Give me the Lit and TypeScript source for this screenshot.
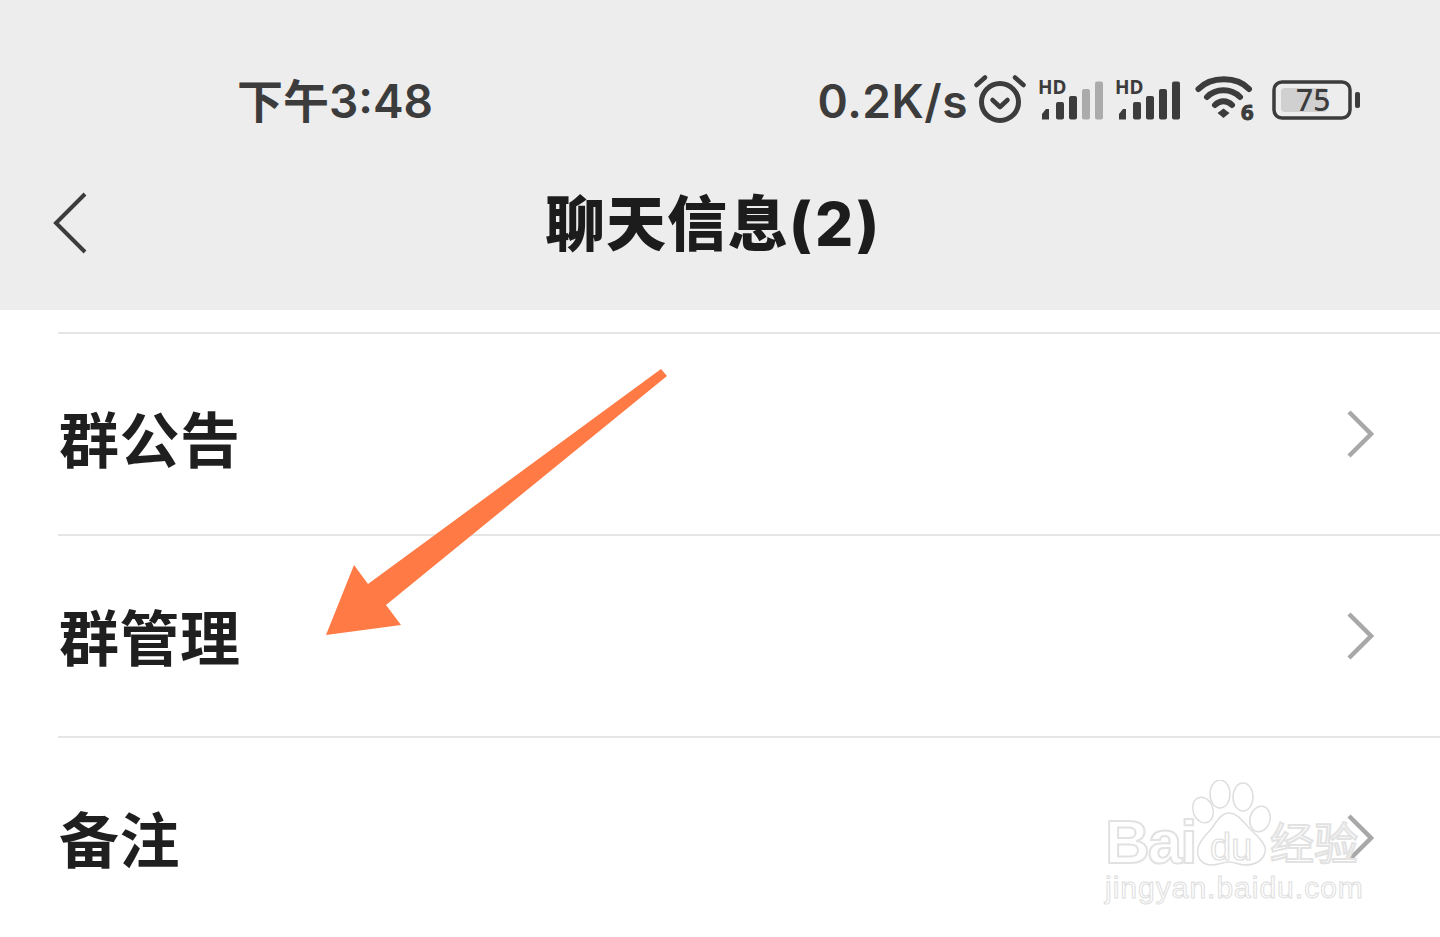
import { LitElement, html, css, svg } from 'lit';
import { customElement } from 'lit/decorators.js';

const rows = ['群公告', '群管理', '备注'];

const signal = (dim: boolean) => html`
  <svg class="signal" width="66" height="56" viewBox="0 -8 66 56">
    <text x="0" y="14" class="hd">HD</text>
    <path d="M4 39.500V34l4-5h3v10.500z" fill="#3c3c3c" />
    <rect x="18" y="22" width="8" height="17.500" rx="2" fill="#3c3c3c" />
    <rect x="31" y="16" width="8" height="23.500" rx="2" fill="#3c3c3c" />
    <rect x="44" y="9" width="8" height="30.500" rx="2" fill=${dim ? '#ababab' : '#3c3c3c'} />
    <rect x="57" y="1.500" width="8" height="38" rx="2" fill=${dim ? '#ababab' : '#3c3c3c'} />
  </svg>
`;

@customElement('app-root')
export class AppRoot extends LitElement {
  static styles = css`
    :host {
      display: block;
      position: relative;
      width: 1440px;
      height: 937px;
      overflow: hidden;
      background: #fff;
      font-family: 'Inter', 'Noto Sans CJK SC', sans-serif;
    }

    .header {
      height: 310px;
      background: #ededed;
      display: flex;
      flex-direction: column;
    }

    .status {
      display: flex;
      align-items: center;
      height: 76px;
      margin-top: 62px;
      padding: 0 78px 0 237px;
      color: #3c3c3c;
    }

    .time {
      font-size: 46px;
      font-weight: 600;
      line-height: 76px;
      flex: 1;
      padding-top: 2px;
    }

    .speed {
      font-size: 46px;
      font-weight: 600;
      line-height: 76px;
      margin-right: 6px;
      letter-spacing: 0.5px;
      padding-top: 2px;
    }

    .alarm {
      margin-right: 12px;
    }

    .signal {
      margin-right: 11px;
    }

    .signal + .signal {
      margin-right: 14px;
    }

    .hd {
      font-family: 'Noto Sans', sans-serif;
      font-size: 19px;
      font-weight: 700;
      fill: #3c3c3c;
    }

    .wifi {
      margin-right: 17px;
    }

    .wifi text {
      font-family: 'Noto Sans', sans-serif;
      font-size: 22px;
      font-weight: 700;
      fill: #3c3c3c;
    }

    .battery text {
      font-family: 'Noto Sans', sans-serif;
      font-size: 30px;
      font-weight: 500;
      fill: #3c3c3c;
    }

    .nav {
      display: flex;
      align-items: center;
      height: 106px;
      margin-top: 32px;
      padding-left: 52px;
    }

    .back {
      display: block;
    }

    .title {
      margin: 2px 0 0 457px;
      font-size: 60px;
      font-weight: 800;
      line-height: 106px;
      letter-spacing: 1px;
      color: #1c1c1c;
      white-space: nowrap;
    }

    .count {
      letter-spacing: 3px;
    }

    .list {
      padding: 22px 0 0 58px;
    }

    .row {
      display: flex;
      align-items: center;
      justify-content: space-between;
      height: 200px;
      border-top: 2px solid #e5e5e5;
      padding-right: 66px;
    }

    .label {
      font-size: 60px;
      font-weight: 700;
      color: #1f1f1f;
      margin: -4px 0 0 1px;
      letter-spacing: 0.5px;
    }

    .row:first-child .label {
      margin-top: 4px;
    }

    .arrow {
      position: absolute;
      left: 0;
      top: 0;
      pointer-events: none;
    }

    .mark {
      position: absolute;
      left: 1100px;
      top: 778px;
      width: 270px;
      height: 132px;
      pointer-events: none;
    }

    .mark-text {
      position: absolute;
      color: #fff;
      -webkit-text-stroke: 2px #e2e2e2;
      white-space: nowrap;
    }

    .bai {
      left: 5px;
      top: 29px;
      font-family: 'Liberation Sans', sans-serif;
      font-size: 62px;
      line-height: 70px;
      font-weight: 700;
      letter-spacing: -2px;
    }

    .jy {
      left: 170px;
      top: 36px;
      font-size: 44px;
      line-height: 60px;
    }

    .url {
      left: 5px;
      top: 92px;
      font-family: 'Liberation Sans', sans-serif;
      font-size: 30px;
      line-height: 36px;
      -webkit-text-stroke: 1px #dedede;
      letter-spacing: 1px;
    }

    .paw {
      position: absolute;
      left: 82px;
      top: 2px;
    }

    .du {
      font-family: 'Liberation Sans', sans-serif;
      font-size: 38px;
      fill: #fff;
      stroke: #dedede;
      stroke-width: 1.2;
    }
  `;

  render() {
    return html`
      <div class="header">
        <div class="status">
          <span class="time">下午3:48</span>
          <span class="speed">0.2K/s</span>
          <svg class="alarm" width="52" height="50" viewBox="0 0 52 50" fill="none" stroke="#3c3c3c">
            <circle cx="26" cy="27" r="18.500" stroke-width="5" />
            <path d="M18.5 25l7.500 7 7.500-7" stroke-width="4.500" stroke-linecap="round" stroke-linejoin="round" />
            <path d="M11 2.500L2.500 10M41 2.500L49.500 10" stroke-width="4.500" stroke-linecap="round" />
          </svg>
          ${signal(true)} ${signal(false)}
          <svg class="wifi" width="60" height="50" viewBox="0 0 60 50" fill="none" stroke="#3c3c3c" stroke-linecap="round">
            <path d="M3.500 14C16 1 42 1 54 14" stroke-width="6" />
            <path d="M12 22C21 13 36 13 45 22" stroke-width="6" />
            <path d="M20 30C25 25 32 25 37 30" stroke-width="6" />
            <path d="M28.500 43l-6-5 6-4.500 6 4.500z" fill="#3c3c3c" stroke="none" />
            <text x="46" y="45">6</text>
          </svg>
          <svg class="battery" width="90" height="40" viewBox="0 0 90 40">
            <rect x="2" y="2" width="76" height="36" rx="8" fill="none" stroke="#3c3c3c" stroke-width="3.500" />
            <rect x="9" y="8" width="46" height="24" rx="4" fill="#d0d0d0" />
            <text x="24" y="31">75</text>
            <rect x="83" y="12" width="5" height="16" rx="2" fill="#3c3c3c" />
          </svg>
        </div>
        <div class="nav">
          <svg class="back" width="36" height="62" viewBox="0 0 36 62" fill="none" stroke="#3c3c3c" stroke-width="4">
            <path d="M33 2L4 31l29 29" />
          </svg>
          <span class="title">聊天信息<span class="count">(2)</span></span>
        </div>
      </div>
      <div class="list">
        ${rows.map(
          label => html`
            <div class="row">
              <span class="label">${label}</span>
              <svg width="28" height="48" viewBox="0 0 28 48" fill="none" stroke="#a8a8a8" stroke-width="4.500">
                <path d="M3 2l22 22L3 46" />
              </svg>
            </div>
          `
        )}
      </div>
      <svg class="arrow" width="1440" height="937" viewBox="0 0 1440 937">
        <path d="M661 369L667 376 386 605 401 625 326 635 354 565 368 584z" fill="#ff7a45" />
      </svg>
      <div class="mark">
        <span class="mark-text bai">Bai</span>
        <svg class="paw" width="90" height="92" viewBox="0 0 90 92">
          ${svg`
            <g fill="#fff" stroke="#dedede" stroke-width="1.500">
              <ellipse cx="21" cy="30" rx="10" ry="13" transform="rotate(-20 21 30)" />
              <ellipse cx="38" cy="14" rx="10" ry="14" />
              <ellipse cx="61" cy="17" rx="10" ry="14" />
              <ellipse cx="78" cy="39" rx="10" ry="13" transform="rotate(15 78 39)" />
              <path d="M47 33c9 0 14 9 22 17 10 9 16 16 14 22-2 10-12 13-20 13-6 0-10-3-16-3s-11 3-17 3C20 85 14 78 16 68c1-7 8-13 14-20 5-7 9-15 17-15z" />
            </g>
            <text class="du" x="28" y="80">du</text>
          `}
        </svg>
        <span class="mark-text jy">经验</span>
        <span class="mark-text url">jingyan.baidu.com</span>
      </div>
    `;
  }
}
